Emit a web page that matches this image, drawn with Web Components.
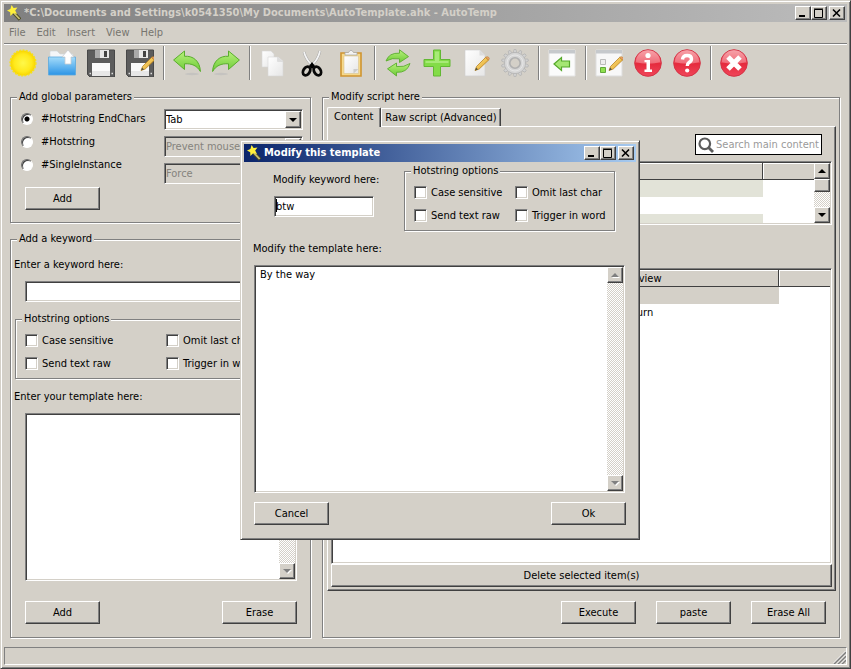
<!DOCTYPE html>
<html lang="en">
<head>
<meta charset="utf-8">
<title>AutoTemp</title>
<style>
html, body { height: 100%; margin: 0; }
body { background: #d4d0c8; color: #000; font: 11px/14px "DejaVu Sans Condensed", "DejaVu Sans", sans-serif; }
</style>
</head>
<body>
<auto-temp></auto-temp>
<script>
const base = `
*, *::before, *::after { box-sizing: border-box; }
:host { display: block; box-sizing: border-box; min-width: 0; }
:host([hidden]) { display: none; }
button, input, select, textarea { font: inherit; color: inherit; margin: 0; border-radius: 0; outline: 0; }
.sunken { border: 1px solid; border-color: #808080 #fff #fff #808080; box-shadow: inset 1px 1px #404040, inset -1px -1px #d4d0c8; padding: 1px; background: #fff; }
.raised { border: 1px solid; border-color: #fff #404040 #404040 #fff; box-shadow: inset -1px -1px #808080; background: #d4d0c8; padding: 0; }
`;
function define(name, css, html) {
  const t = document.createElement('template');
  customElements.define(name, class extends HTMLElement {
    constructor() {
      super();
      this.attachShadow({ mode: 'open' });
    }
    connectedCallback() {
      if (this.shadowRoot.childNodes.length) return;
      t.innerHTML = `<style>${base}${css}</style>${typeof html === 'function' ? html(this) : html}`;
      this.shadowRoot.append(t.content.cloneNode(true));
    }
  });
}

const defs = `<defs>
<radialGradient id="sun"><stop offset="0" stop-color="#fff84a"/><stop offset=".7" stop-color="#ffe91c"/><stop offset="1" stop-color="#f8d400"/></radialGradient>
<linearGradient id="blue" x2="0" y2="1"><stop offset="0" stop-color="#a5dcfa"/><stop offset="1" stop-color="#2b94e6"/></linearGradient>
<linearGradient id="green" x2="0" y2="1"><stop offset="0" stop-color="#b8f07c"/><stop offset="1" stop-color="#6ccb35"/></linearGradient>
<linearGradient id="red" x2="0" y2="1"><stop offset="0" stop-color="#f58a93"/><stop offset=".5" stop-color="#ec4454"/><stop offset=".52" stop-color="#e52a3d"/><stop offset="1" stop-color="#f0465a"/></linearGradient>
<linearGradient id="paper" x2="1" y2="1"><stop offset="0" stop-color="#fff"/><stop offset="1" stop-color="#e6e6e6"/></linearGradient>
<linearGradient id="gold" x2="1" y2="1"><stop offset="0" stop-color="#ffe58a"/><stop offset="1" stop-color="#e0a020"/></linearGradient>
</defs>`;
const pencil = (x, y) => `<g transform="translate(${x} ${y})"><path d="M0 14.5 1.6 10.4 10.6 1.4 13.6 4 4.2 13Z" fill="url(#gold)" stroke="#b98220" stroke-width=".8"/><path d="M10.6 1.4Q12 0 13.6 1.2 15 2.6 13.6 4Z" fill="#f0a070" stroke="#b98220" stroke-width=".6"/><path d="M0 14.5 1.2 11.6 3 13.4Z" fill="#554"/></g>`;
const floppy = `<path d="M1 1H27.5V28H3L.5 25.5V1Z" fill="#5c5c5c" stroke="#484848"/><path d="M8 1H22V9H8Z" fill="#e8e8e8"/><path d="M8 1H13V9H8Z" fill="#aaa"/><path d="M17 2H20V8H17Z" fill="#444"/><path d="M5 14H23V27H5Z" fill="#fafafa"/><path d="M5 22H23V27H5Z" fill="#e7e7e7"/><path d="M2.5 24.5h1.5M24.5 24.5H26" stroke="#ddd" stroke-width="1.4"/>`;
const orb = `<circle cx="14" cy="14" r="13.3" fill="url(#red)" stroke="#d33446" stroke-width="1"/><path d="M2 13A12 12 0 0 1 26 13Q14 17 2 13Z" fill="#fff" opacity=".22"/>`;
const undo = `<ellipse cx="19" cy="25" rx="7" ry="1.2" fill="#bbb" opacity=".6"/><path d="M.6 11 11.5 2V7.3C20 6.5 27 12 27.4 22.5 24 16.8 19 14.3 11.5 14.8V20.5Z" fill="url(#green)" stroke="#59ad2c"/>`;
const gearTeeth = Array.from({ length: 14 }, (_, i) => `<path d="M12.2 4 13 .5H15L15.8 4Z" transform="rotate(${i * 360 / 14} 14 14)"/>`).join('');
const icons = {
  sun: `<circle cx="14" cy="14" r="12.6" fill="url(#sun)"/><circle cx="14" cy="14" r="12.8" fill="none" stroke="#f6e01c" stroke-width="1.6" stroke-dasharray="2 1.3"/>`,
  open: `<path d="M2 3Q2 2 3 2H9L12 5H25V12H2Z" fill="#f4f6f8" stroke="#cfd6da" stroke-width=".6"/><path d="M.5 8H27.5V26H.5Z" fill="url(#blue)" stroke="#5aa8dd" stroke-width=".8"/><path d="M20 1 26 8H23V15H17V8H14Z" fill="#fff" stroke="#c8ccd0" stroke-width=".8"/>`,
  save: floppy,
  saveas: floppy + pencil(15, 7),
  undo,
  redo: `<g transform="translate(28 0) scale(-1 1)">${undo}</g>`,
  copy: `<g fill="url(#paper)" stroke="#d7d7d7" stroke-width=".6"><path d="M3 2H12L15 5V18H3Z"/><path d="M9 8H19L24 12V27H9Z"/><path d="M18.5 8V12.5H24" fill="#ddd"/></g>`,
  cut: `<path d="M6 3Q8 11 15 17M22 2Q20 11 13 17" fill="none" stroke="#999" stroke-width="2.6"/><path d="M6 3Q8 11 15 17M22 2Q20 11 13 17" fill="none" stroke="#f4f4f4" stroke-width="1.8"/><path d="M14 13 17 17 14 20 11 17Z"/><g fill="none" stroke="#080808" stroke-width="2.8"><ellipse cx="8.6" cy="22" rx="3.2" ry="4.6" transform="rotate(32 8.6 22)"/><ellipse cx="19.4" cy="22" rx="3.2" ry="4.6" transform="rotate(-32 19.4 22)"/></g>`,
  paste: `<path d="M4 4H24V27H4Z" fill="#f6d98c" stroke="#cf9430" stroke-width="1.6"/><path d="M7 7H21.5V24.5H7Z" fill="url(#paper)" stroke="#d8c490" stroke-width=".6"/><path d="M16.5 24.5V20H21.5Z" fill="#ccc"/><path d="M8 6V3.5H11.5Q14 -1 16.5 3.5H20V6Z" fill="#f3f3f3" stroke="#aaa" stroke-width=".8"/>`,
  refresh: `<g fill="url(#green)" stroke="#5aae2c" stroke-width=".9"><path d="M2 12Q5 3.5 15.5 4.2V.8L24.500 7.6 15.5 13.5V9.8Q8 8.5 2 12Z"/><path d="M26 14.5Q23 24 12.5 23.3V27L3.5 19.8 12.5 14V17.6Q20 18.5 26 14.5Z"/></g>`,
  plus: `<path d="M10.5 1H17.5V10.5H27V17.5H17.5V27H10.5V17.5H1V10.5H10.5Z" fill="#83dc48" stroke="#62b833"/><path d="M12 2.5H16V12H25.5V14H2.5V12H12Z" fill="#b6f08b" opacity=".7"/>`,
  edit: `<path d="M3 1H18L23 6V27H3Z" fill="url(#paper)" stroke="#d0d0d0" stroke-width=".7"/><path d="M17.5 1V6.5H23Z" fill="#dcdcdc"/>${pencil(13, 7)}`,
  gear: `<g fill="#d2d2d2" stroke="#b2b2b2" stroke-width=".7">${gearTeeth}<circle cx="14" cy="14" r="10.6"/></g><circle cx="14" cy="14" r="10.1" fill="#d6d6d6"/><circle cx="14" cy="14" r="8" fill="none" stroke="#e6e6e6"/><circle cx="14" cy="14" r="5.2" fill="#d4d0c8" stroke="#b0b0b0" stroke-width="1.6"/>`,
  back: `<path d="M1 1H27V27H1Z" fill="#fbfbfb" stroke="#e4e4e4"/><path d="M1 1H27V4.5H1Z" fill="#c6c9cc"/><path d="M6 15 13.5 8.5V12H21.5V18H13.5V21.5Z" fill="#a5e673" stroke="#55a82a" stroke-width="1.2"/>`,
  form: `<path d="M1 1H27V27H1Z" fill="#f8f8f8" stroke="#dedede"/><path d="M1 1H27V4.5H1Z" fill="#c6c9cc"/><path d="M5.5 10.5H10.5V15.5H5.5Z" fill="#eee" stroke="#bbb"/><path d="M5.5 18.5H10.5V23.5H5.5Z" fill="#8fe04f" stroke="#62a83a"/>${pencil(14, 7)}`,
  info: orb + `<circle cx="14" cy="6.5" r="2.6" fill="#fff"/><path d="M10.5 11H16V20.5H18V23H10.5V20.5H12.5V13.2H10.5Z" fill="#fff"/>`,
  help: orb + `<path d="M9.5 10.5Q9.8 6.5 14.2 6.5 18.5 6.5 18.5 10 18.5 12 16 13.5 14.3 14.6 14.3 17" fill="none" stroke="#fff" stroke-width="3.4"/><circle cx="14.2" cy="21.5" r="2.1" fill="#fff"/>`,
  exit: orb + `<path d="M8 8 20 20M20 8 8 20" stroke="#fff" stroke-width="5"/>`
};

define('tool-button', `
:host { width: 39px; }
button { display: flex; width: 100%; height: 36px; border: 0; padding: 0 2px 0 0; background: none; align-items: center; justify-content: center; }
`, el => `<button type="button" aria-label="${el.getAttribute('label')}"><svg width="28" height="28" viewBox="0 0 28 28">${defs}${icons[el.getAttribute('icon')]}</svg></button>`);

define('tool-separator', `:host { width: 8px; height: 34px; display: flex; justify-content: center; }
i { width: 2px; background: linear-gradient(90deg, #808080 50%, #fff 50%); }`, `<i></i>`);

define('window-frame', `
:host { display: flex; flex-direction: column; background: #d4d0c8; border: 1px solid; border-color: #d4d0c8 #404040 #404040 #d4d0c8; box-shadow: inset 1px 1px #fff, inset -1px -1px #808080; padding: 3px; }
header { flex: none; display: flex; align-items: center; height: 18px; padding: 0 2px 0 3px; background: linear-gradient(90deg, #808080, #bcbcbc); color: #d4d0c8; }
:host([active]) header { background: linear-gradient(90deg, #0a246a, #a6caf0); color: #fff; }
h1 { flex: 1; min-width: 0; margin: 0 0 0 3px; font-size: 11px; line-height: 16px; font-weight: bold; white-space: nowrap; overflow: hidden; }
svg { display: block; flex: none; }
header button { width: 16px; height: 14px; display: grid; place-items: center; color: #000; }
header button:last-child { margin-left: 2px; }
section { flex: 1; min-height: 0; display: flex; flex-direction: column; }
`, el => `<header>
<svg width="14" height="16" viewBox="0 0 14 16"><path d="M6 7 13 14.500" stroke="#4a4a20" stroke-width="3.4"/><path d="M6 7 12.600 14" stroke="#c8bf70" stroke-width="1.800"/><path d="M4.600 0 6.600 3 10.500 2.400 8.200 5.600 10 9 6.400 8 3.400 11 3.200 7.300 0 5.400 3.400 4Z" fill="#fff03a"/></svg>
<h1>${el.getAttribute('caption')}</h1>
<button type="button" class="raised" aria-label="Minimize"><svg width="12" height="10" viewBox="0 0 12 10"><path d="M2 8H8" stroke="#000" stroke-width="2"/></svg></button>
<button type="button" class="raised" aria-label="Maximize"><svg width="12" height="10" viewBox="0 0 12 10" fill="none" stroke="#000"><path d="M1.500 1.500H9.500V9.500H1.500ZM1 1H10"/></svg></button>
<button type="button" class="raised" aria-label="Close"><svg width="12" height="10" viewBox="0 0 12 10"><path d="M2 1.500 9 8.500M9 1.500 2 8.500" stroke="#000" stroke-width="1.600"/></svg></button>
</header><section><slot></slot></section>`);

define('menu-bar', `
nav { display: flex; gap: 11px; padding: 4px 5px 3px; }
button { border: 0; padding: 0; background: none; color: #77756f; }
`, `<nav>${['File', 'Edit', 'Insert', 'View', 'Help'].map(m => `<button type="button">${m}</button>`).join('')}</nav>`);

define('push-button', `:host { width: 75px; } button { display: block; width: 100%; height: 23px; }`,
  `<button type="button" class="raised"><slot></slot></button>`);

define('group-box', `
:host { display: flex; flex-direction: column; }
fieldset { flex: 1; min-width: 0; margin: 0; padding: 0; border: 1px solid #808080; box-shadow: 1px 1px #fff, inset 1px 1px #fff; display: flex; flex-direction: column; }
legend { margin-left: 6px; padding: 0 2px; background: #d4d0c8; line-height: 14px; white-space: nowrap; }
`, el => `<fieldset><legend>${el.getAttribute('caption')}</legend><slot></slot></fieldset>`);

define('check-box', `
:host { height: 23px; display: flex; align-items: center; }
label { padding-left: 4px; white-space: nowrap; }
input { appearance: none; flex: none; width: 13px; height: 13px; }
`, el => `<input id="c" type="checkbox" class="sunken"><label for="c">${el.getAttribute('label')}</label>`);

define('hotstring-options', `
div { display: grid; grid-template-columns: var(--column, 101px) 1fr; padding: 3px 9px; }
`, `<group-box caption="Hotstring options"><div>
<check-box label="Case sensitive"></check-box><check-box label="Omit last char"></check-box>
<check-box label="Send text raw"></check-box><check-box label="Trigger in word"></check-box></div></group-box>`);

define('scroll-bar', `
:host { width: 16px; flex: none; display: flex; flex-direction: column; background: repeating-conic-gradient(#d4d0c8 0 25%, #fff 0 50%) 0 0 / 2px 2px; }
button { height: 16px; display: grid; place-items: center; flex: none; width: 16px; }
button:last-child { margin-top: auto; }
i { height: 13px; flex: none; }
svg { fill: #000; }
:host([disabled]) svg { fill: #808080; filter: drop-shadow(1px 1px 0 #fff); }
`, el => {
  const off = el.hasAttribute('disabled');
  return `<button type="button" class="raised" aria-label="Scroll up"${off ? ' disabled' : ''}><svg width="8" height="4"><path d="M0 4 4 0 8 4Z"/></svg></button>
${off ? '' : '<i class="raised"></i>'}
<button type="button" class="raised" aria-label="Scroll down"${off ? ' disabled' : ''}><svg width="8" height="4"><path d="M0 0H8L4 4Z"/></svg></button>`;
});

define('text-area', `
:host { display: flex; flex-direction: column; }
label { line-height: 14px; padding-bottom: 9px; margin-left: calc(0px - var(--outdent, 0px)); }
div { flex: 1; display: flex; min-height: 0; }
textarea { flex: 1; min-width: 0; resize: none; border: 0; padding: 1px 3px 0 4px; background: none; overflow: hidden; }
`, el => `<label for="t">${el.getAttribute('label')}</label><div class="sunken"><textarea id="t">${el.getAttribute('value') || ''}</textarea><scroll-bar disabled></scroll-bar></div>`);

define('text-field', `
label { display: block; padding-bottom: 9px; margin-left: calc(0px - var(--outdent, 0px)); white-space: nowrap; }
input { display: block; width: 100%; height: 21px; }
:host([caret]) input { background: linear-gradient(#000, #000) 1px 2px / 1px 13px no-repeat #fff; }
`, el => `<label for="f">${el.getAttribute('label')}</label><input id="f" type="text" class="sunken" value="${el.getAttribute('value') || ''}">`);

define('drop-down', `
:host { display: grid; height: 21px; }
select, i { grid-area: 1 / 1; }
select { appearance: none; width: 100%; padding: 1px 18px 0 2px; opacity: 1; }
select:disabled { background: #d4d0c8; color: #85837d; }
i { justify-self: end; align-self: center; margin-right: 2px; width: 16px; height: 17px; display: grid; place-items: center; pointer-events: none; }
`, el => {
  const v = el.getAttribute('value');
  return `<select class="sunken" aria-label="${v}"${el.hasAttribute('disabled') ? ' disabled' : ''}><option>${v}</option></select><i class="raised"><svg width="8" height="4"><path d="M0 0H8L4 4Z"/></svg></i>`;
});

define('global-parameters', `
.grid { display: grid; grid-template-columns: 143px 1fr; padding: 3px 7px 0 10px; }
.radio { height: 23px; display: flex; align-items: center; }
input { appearance: none; flex: none; width: 12px; height: 12px; border-radius: 50%; border: 1px solid; border-color: #6c6c6c #fff #fff #6c6c6c; background: #fff; box-shadow: inset 1px 1px #404040; }
input:checked { background: radial-gradient(circle, #000 0 2px, #fff 3px); }
label { padding-left: 8px; white-space: nowrap; }
.drops { display: grid; gap: 6px; padding-top: 2px; align-content: start; }
push-button { margin: 3px 0 12px 14px; }
`, `<group-box caption="Add global parameters"><div class="grid"><div>
<div class="radio"><input type="radio" name="p" id="a" checked><label for="a">#Hotstring EndChars</label></div>
<div class="radio"><input type="radio" name="p" id="b"><label for="b">#Hotstring</label></div>
<div class="radio"><input type="radio" name="p" id="c"><label for="c">#SingleInstance</label></div></div>
<div class="drops"><drop-down value="Tab"></drop-down><drop-down value="Prevent mouse" disabled></drop-down><drop-down value="Force" disabled></drop-down></div></div>
<push-button>Add</push-button></group-box>`);

define('keyword-form', `
:host { display: flex; flex-direction: column; }
group-box { flex: 1; }
.form { flex: 1; display: flex; flex-direction: column; padding: 12px 13px 13px 14px; --outdent: 11px; }
hotstring-options { margin: 10px -10px 11px; --column: 141px; }
text-area { flex: 1; }
footer { display: flex; justify-content: space-between; margin-top: 20px; }
`, `<group-box caption="Add a keyword"><div class="form"><text-field label="Enter a keyword here:"></text-field>
<hotstring-options></hotstring-options>
<text-area label="Enter your template here:"></text-area>
<footer><push-button>Add</push-button><push-button>Erase</push-button></footer></div></group-box>`);

define('list-view', `
:host { display: flex; flex-direction: column; }
div { flex: 1; min-height: 0; display: flex; align-items: stretch; overflow: hidden; }
section { flex: 1; min-width: 0; overflow: hidden; }
table { width: 100%; table-layout: fixed; border-collapse: separate; border-spacing: 0; }
th { height: 17px; padding: 1px 0 0; font-weight: normal; line-height: 14px; text-align: left; background: #d4d0c8; border-bottom: 1px solid #404040; border-right: 1px solid #404040; box-shadow: inset 1px 1px #fff; }
th:last-child { border-right: 0; }
td { height: 17px; padding: 0; line-height: 17px; overflow: hidden; white-space: nowrap; }
.tint { background: #e2e3d8; } .picked { background: #d4d0c8; }
`, el => el.getAttribute('kind') === 'parameters'
  ? `<div class="sunken"><section><table aria-label="Parameters"><colgroup><col><col style="width:51px"></colgroup><thead><tr><th></th><th></th></tr></thead>
<tbody><tr><td class="tint"></td><td></td></tr><tr><td></td><td></td></tr><tr><td class="tint"></td><td></td></tr></tbody></table></section><scroll-bar></scroll-bar></div>`
  : `<div class="sunken"><section><table aria-label="Templates"><colgroup><col><col style="width:156px"><col style="width:51px"></colgroup><thead><tr><th></th><th>Preview</th><th></th></tr></thead>
<tbody><tr><td class="picked"></td><td class="picked"></td><td></td></tr><tr><td></td><td>return</td><td></td></tr></tbody></table></section></div>`);

define('script-panel', `
:host { display: flex; flex-direction: column; }
group-box { flex: 1; }
.body { flex: 1; display: flex; flex-direction: column; padding: 3px 3px 13px 4px; }
.tabs { display: flex; align-items: flex-end; height: 19px; }
.tabs button { background: #d4d0c8; border: 1px solid; border-color: #fff #404040 #d4d0c8 #fff; height: 18px; padding: 0 3px; box-shadow: inset -1px 0 #808080; border-bottom: 0; white-space: nowrap; }
.tabs button:first-child { height: 20px; padding: 0 7px 2px 6px; margin-bottom: -1px; z-index: 1; border-radius: 2px 2px 0 0; }
.panel { flex: 1; display: flex; flex-direction: column; border: 1px solid; border-color: #fff #404040 #404040 #fff; box-shadow: inset -1px -1px #808080; padding: 7px 3px 3px; }
.search { align-self: flex-end; display: flex; align-items: center; width: 127px; height: 21px; margin: 0 10px 6px 0; border: 1px solid #000; background: #fff; padding-left: 2px; }
.search input { flex: 1; min-width: 0; border: 0; padding: 0 0 0 2px; background: none; height: 17px; }
.search svg { flex: none; }
input::placeholder { color: #9a9a9a; opacity: 1; }
.first { height: 64px; margin-bottom: 43px; }
.second { flex: 1; }
.wide { width: auto; }
footer { display: flex; justify-content: flex-end; gap: 20px; margin: 10px 10px 0 0; }
`, `<group-box caption="Modify script here"><div class="body">
<div class="tabs" role="tablist"><button type="button" role="tab" aria-selected="true">Content</button><button type="button" role="tab">Raw script (Advanced)</button></div>
<div class="panel"><div class="search"><svg width="16" height="16" viewBox="0 0 16 16" fill="none" stroke="#5c5c5c"><circle cx="6.800" cy="6.800" r="5.300" stroke-width="2.200"/><path d="M10.500 10.500 15 15" stroke-width="2.800"/></svg><input type="text" aria-label="Search" placeholder="Search main content"></div>
<list-view class="first" kind="parameters"></list-view><list-view class="second" kind="templates"></list-view>
<push-button class="wide">Delete selected item(s)</push-button></div>
<footer><push-button>Execute</push-button><push-button>paste</push-button><push-button>Erase All</push-button></footer></div></group-box>`);

define('status-bar', `
:host { display: flex; justify-content: flex-end; align-items: flex-end; height: 18px; border: 1px solid; border-color: #808080 #fff #fff #808080; }
svg { display: block; }
`, `<svg width="13" height="13" viewBox="0 0 13 13"><path d="M1 13 13 1M5 13 13 5M9 13 13 9" stroke="#808080" stroke-width="1.600"/><path d="M0 12.500 12.500 0M4 12.500 13 3.500M8 12.500 13 7.500" stroke="#fff" stroke-width=".8"/></svg>`);

define('template-dialog', `
.top { display: flex; justify-content: space-between; padding: 2px 21px 0 30px; }
text-field { width: 100px; padding-top: 9px; --outdent: 1px; }
hotstring-options { width: 211px; --column: 101px; }
text-area { flex: 1; margin: 11px 11px 9px 10px; --outdent: 1px; }
footer { display: flex; justify-content: space-between; padding: 0 10px 11px; }
window-frame { height: 100%; }
`, `<window-frame active caption="Modify this template"><div class="top"><text-field caret label="Modify keyword here:" value="btw"></text-field><hotstring-options></hotstring-options></div>
<text-area label="Modify the template here:" value="By the way"></text-area>
<footer><push-button>Cancel</push-button><push-button>Ok</push-button></footer></window-frame>`);

const tools = ['sun:New', 'open:Open', 'save:Save', 'saveas:Save as', '|', 'undo:Undo', 'redo:Redo', '|', 'copy:Copy', 'cut:Cut', 'paste:Paste', '|', 'refresh:Refresh', 'plus:Add', 'edit:Edit', 'gear:Settings', '|', 'back:Import', '|', 'form:Options', 'info:About', 'help:Help', '|', 'exit:Exit'];

define('auto-temp', `
:host { position: relative; min-height: 100%; display: flex; flex-direction: column; }
.app { flex: 1; min-height: 100vh; }
.tools { display: flex; align-items: center; height: 42px; padding-bottom: 3px; border-top: 1px solid #808080; box-shadow: inset 0 1px #fff; }
main { flex: 1; display: grid; grid-template-columns: minmax(0, 301fr) minmax(0, 518fr); gap: 11px; padding: 5px 7px 9px 6px; }
.left { display: flex; flex-direction: column; gap: 9px; }
keyword-form { flex: 1; }
template-dialog { position: absolute; left: 240px; top: 140px; width: 400px; height: 400px; z-index: 2; }
`, `<window-frame class="app" caption="*C:\\Documents and Settings\\k0541350\\My Documents\\AutoTemplate.ahk - AutoTemp">
<menu-bar></menu-bar>
<div class="tools" role="toolbar">${tools.map(t => { if (t === '|') return '<tool-separator></tool-separator>'; const [i, l] = t.split(':'); return `<tool-button icon="${i}" label="${l}"></tool-button>`; }).join('')}</div>
<main><div class="left"><global-parameters></global-parameters><keyword-form></keyword-form></div><script-panel></script-panel></main>
<status-bar></status-bar></window-frame><template-dialog></template-dialog>`);
</script>
</body>
</html>
